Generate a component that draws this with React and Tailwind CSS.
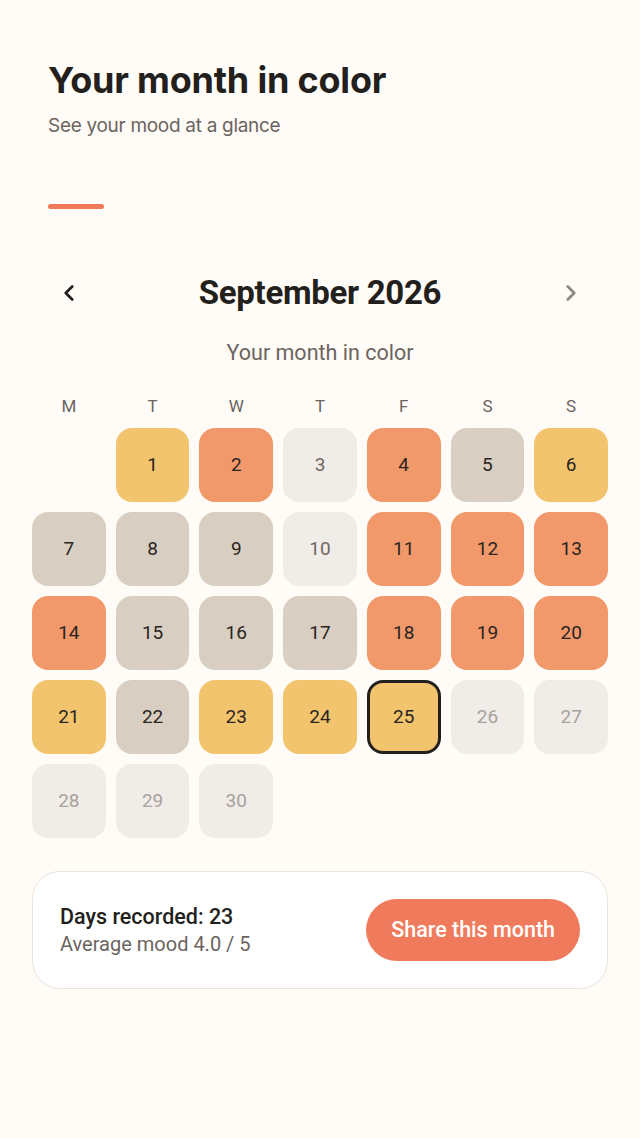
import { ChevronLeft, ChevronRight } from 'lucide-react';

const tone = {
    yellow: 'bg-[#f2c46e] text-[#2a2420]',
    orange: 'bg-[#f2996c] text-[#2a2420]',
    beige: 'bg-[#d8cfc2] text-[#2a2420]',
    empty: 'bg-[#f0ece7] text-[#6f6863]',
    future: 'bg-[#f0ece7] text-[#a8a29d]',
};

// mood per day, September 2026 starts on a Tuesday
const days = [
    'yellow', 'orange', 'empty', 'orange', 'beige', 'yellow',
    'beige', 'beige', 'beige', 'empty', 'orange', 'orange', 'orange',
    'orange', 'beige', 'beige', 'beige', 'orange', 'orange', 'orange',
    'yellow', 'beige', 'yellow', 'yellow', 'yellow', 'future', 'future',
    'future', 'future', 'future',
];

const weekdays = ['M', 'T', 'W', 'T', 'F', 'S', 'S'];

export default function App() {
    return (
        <div className="min-h-[1138px] w-[640px] bg-[#fffbf6] font-['Roboto',sans-serif]">
            <div className="px-12 pt-[58px]">
                <h1 className="font-['Inter',sans-serif] text-[36px] font-bold leading-[44px] tracking-[-0.2px] text-[#231f1c]">
                    Your month in color
                </h1>
                <p className="mt-[12px] font-['Inter',sans-serif] text-[19px] leading-[24px] tracking-[-0.3px] text-[#6b6460]">
                    See your mood at a glance
                </p>
                <div className="mt-[66px] h-[5px] w-[56px] rounded-full bg-[#f07b5c]"></div>
            </div>

            <div className="mt-[62px] px-8">
                <div className="flex items-center justify-between px-[24px]">
                    <ChevronLeft className="h-[26px] w-[26px] text-[#231f1c]" strokeWidth={2.5} />
                    <h2 className="text-[33px] font-bold leading-[44px] tracking-[-0.3px] text-[#231f1c]">
                        September 2026
                    </h2>
                    <ChevronRight className="h-[26px] w-[26px] text-[#8f8883]" strokeWidth={2.5} />
                </div>
                <p className="mt-[25px] text-center text-[21.5px] leading-[26px] text-[#6b6460]">Your month in color</p>

                <div className="mt-[30px] grid grid-cols-7 gap-[10px]">
                    {weekdays.map((d, i) => (
                        <div key={i} className="text-center text-[17px] leading-[20px] text-[#6b6460]">
                            {d}
                        </div>
                    ))}
                </div>

                <div className="mt-[12px] grid grid-cols-7 gap-[10px]">
                    <div></div>
                    {days.map((t, i) => (
                        <div
                            key={i}
                            className={`flex h-[74px] items-center justify-center rounded-[16px] text-[19px] font-normal ${tone[t]} ${i === 24 ? 'border-[3px] border-[#231f1c]' : ''}`}
                        >
                            {i + 1}
                        </div>
                    ))}
                </div>

                <div className="mt-[33px] flex items-center justify-between rounded-[28px] border border-[#ebe3da] bg-white py-[27px] pl-[27px] pr-[27px]">
                    <div>
                        <p className="text-[21.5px] font-medium leading-[26px] text-[#231f1c]">Days recorded: 23</p>
                        <p className="mt-[2px] text-[20px] leading-[24px] text-[#6b6460]">Average mood 4.0 / 5</p>
                    </div>
                    <button className="h-[62px] rounded-full bg-[#f07b5c] px-[25px] text-[21.5px] font-medium text-white">
                        Share this month
                    </button>
                </div>
            </div>
        </div>
    );
}
